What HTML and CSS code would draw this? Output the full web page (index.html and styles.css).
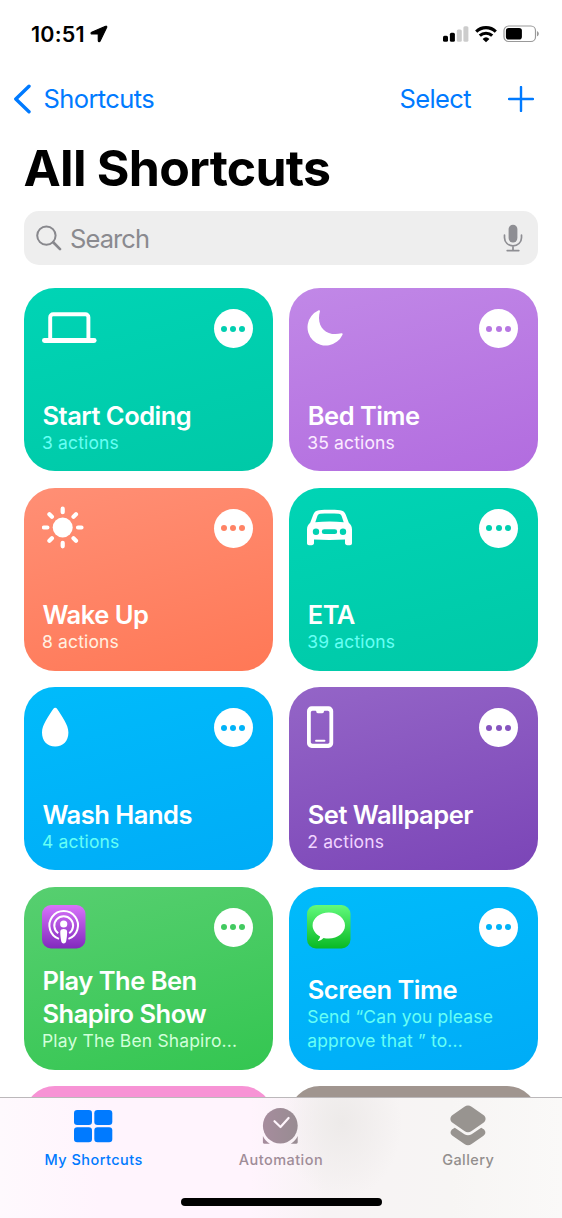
FILE: index.html
```html
<!DOCTYPE html>
<html lang="en">
<head>
<meta charset="utf-8">
<title>All Shortcuts</title>
<link rel="stylesheet" href="styles.css">
</head>
<body>
<div class="phone">
  <main class="content">
    <div class="status">
      <div class="status-left">
        <span class="time">10:51</span>
        <svg class="location" width="18" height="18" viewBox="0 0 18 18"><path d="M15.6 1.2 1.700 7.200c-1.100.5-.8 1.800.4 1.800h5.700c.3 0 .5.2.5.5v6c0 1.300 1.300 1.500 1.800.4L16.700 2.300c.3-.8-.3-1.500-1.100-1.100z" fill="#000" stroke="#000" stroke-width="1.200"/></svg>
      </div>
      <div class="status-right">
        <svg width="26" height="17" viewBox="0 0 26 17"><rect x="0" y="9.700" width="5" height="6" rx="1.500"/><rect x="6.900" y="6.800" width="5" height="8.900" rx="1.500"/><g fill="#ccc"><rect x="13.800" y="3.600" width="5" height="12.100" rx="1.500"/><rect x="20.400" y="0.200" width="5" height="15.500" rx="1.500"/></g></svg>
        <svg width="22" height="17" viewBox="0 0 22 17"><g fill="none" stroke="#000" stroke-width="3.100"><path d="M1.200 5.600a14 14 0 0 1 19.600 0"/><path d="M4.800 9.700a8.900 8.900 0 0 1 12.400 0"/></g><path d="M7.600 12.900a5 5 0 0 1 6.800 0L11 16.300z"/></svg>
        <svg width="37" height="18" viewBox="0 0 37 18"><rect x="1" y="1" width="31.500" height="15.500" rx="4.600" fill="none" stroke="#999" stroke-width="1.200"/><rect x="2.900" y="2.900" width="16" height="11.700" rx="2.800"/><path d="M34 6.300c2.400.6 2.400 4.400 0 5z" fill="#999"/></svg>
      </div>
    </div>

    <nav class="nav">
      <div class="back">
        <svg width="20" height="30" viewBox="0 0 20 30"><path d="M17 2.200 3.800 15 17 27.800" fill="none" stroke="#007aff" stroke-width="3.400" stroke-linecap="round" stroke-linejoin="round"/></svg>
        <span class="back-label">Shortcuts</span>
      </div>
      <div class="nav-actions">
        <span class="select">Select</span>
        <svg width="26" height="26" viewBox="0 0 26 26"><path d="M13 1v24M1 13h24" stroke="#007aff" stroke-width="2.400" stroke-linecap="round"/></svg>
      </div>
    </nav>

    <h1 class="title">All Shortcuts</h1>

    <div class="search">
      <svg width="26" height="26" viewBox="0 0 26 26"><g fill="none" stroke="#88888d" stroke-linecap="round"><circle cx="10.400" cy="10.600" r="9.200" stroke-width="2"/><path d="m17.200 17.300 6.800 6.800" stroke-width="2.700"/></g></svg>
      <span class="search-label">Search</span>
      <svg width="20" height="28" viewBox="0 0 20 28"><rect x="5.600" y=".7" width="8.800" height="17.800" rx="4.400" fill="#8e8e93"/><path d="M1.500 11.200v2.500a8.500 8.200 0 0 0 17 0v-2.500M10 21.900v4.600M4.200 26.600h11.600" fill="none" stroke="#8e8e93" stroke-width="1.700" stroke-linecap="round"/></svg>
    </div>

    <section class="grid">
      <article class="card teal">
        <div class="card-top">
          <svg width="56" height="44" viewBox="0 0 56 44"><path d="M8.200 32.500V11.200a3 3 0 0 1 3-3h32.200a3 3 0 0 1 3 3V32.500" fill="none" stroke="#fff" stroke-width="3.900"/><rect x="0" y="32" width="54.600" height="4.900" rx="2.450" fill="#fff"/></svg>
          <span class="more"><i></i><i></i><i></i></span>
        </div>
        <h2>Start Coding</h2><p>3 actions</p>
      </article>
      <article class="card lilac">
        <div class="card-top">
          <svg width="56" height="44" viewBox="0.700 -0.500 56 44"><path d="M13.700 4.600c-.1-.8-.8-1-1.700-.6A18.300 18.300 0 1 0 36.200 28.200c.4-1-.1-1.700-1-1.400C20.500 30.500 9.200 20.500 13.700 4.600z" fill="#fff"/></svg>
          <span class="more"><i></i><i></i><i></i></span>
        </div>
        <h2>Bed Time</h2><p>35 actions</p>
      </article>
      <article class="card coral">
        <div class="card-top">
          <svg width="56" height="44" viewBox="0 0 56 44"><circle cx="20.700" cy="21.500" r="10" fill="#fff"/><path d="M20.700 2.700v3.500M20.700 36.800v3.500M1.900 21.500h3.500M36 21.500h3.500M7.400 8.200l2.500 2.500M31.500 32.300l2.500 2.500M34 8.200l-2.500 2.500M9.900 32.300l-2.500 2.500" stroke="#fff" stroke-width="4.200" stroke-linecap="round"/></svg>
          <span class="more"><i></i><i></i><i></i></span>
        </div>
        <h2>Wake Up</h2><p>8 actions</p>
      </article>
      <article class="card teal">
        <div class="card-top">
          <svg width="56" height="44" viewBox="0 0 56 44"><path fill="#fff" fill-rule="evenodd" d="M0 23.500c0-3 1-4.700 3.200-6.700l3-8C7.200 5.800 9 4.400 12 4.200c7-.5 14-.5 21 0 3 .2 4.800 1.600 5.800 4.600l3 8c2.200 2 3.200 3.700 3.200 6.700v13.800c0 1.100-.9 2-2 2h-2.700c-1.300 0-2.300-.9-2.300-2.200v-3.500c-10 .6-21 .6-31 0v3.500C7 38.400 6 39.300 4.700 39.300H2c-1.100 0-2-.9-2-2zM8.300 16.200c9-.9 19.400-.9 28.400 0l-2-6c-.5-1.500-1.400-2.300-3-2.400-6-.4-12.400-.4-18.400 0-1.600.1-2.500.9-3 2.400zM9 22.600a3.200 3.200 0 1 0 0 6.400 3.200 3.200 0 0 0 0-6.400m27 0a3.200 3.200 0 1 0 0 6.400 3.200 3.200 0 0 0 0-6.400m-18.800.7a2.400 2.400 0 0 0 0 4.800h10.600a2.400 2.400 0 0 0 0-4.800z"/></svg>
          <span class="more"><i></i><i></i><i></i></span>
        </div>
        <h2>ETA</h2><p>39 actions</p>
      </article>
      <article class="card blue">
        <div class="card-top">
          <svg width="56" height="44" viewBox="0 -0.500 56 44"><path d="M11.200 3.600c1-1.700 3-1.700 4 0C20 11 26.400 19.500 26.400 27c0 8.500-5.200 13.900-13.200 13.900S0 35.500 0 27C0 19.500 6.400 11 11.200 3.600z" fill="#fff"/></svg>
          <span class="more"><i></i><i></i><i></i></span>
        </div>
        <h2>Wash Hands</h2><p class="aqua">4 actions</p>
      </article>
      <article class="card purple">
        <div class="card-top">
          <svg width="56" height="44" viewBox="0 -0.500 56 44"><path fill="#fff" fill-rule="evenodd" d="M4.700.800h16.800a4.700 4.700 0 0 1 4.700 4.700v32.300a4.700 4.700 0 0 1-4.700 4.700H4.700A4.700 4.700 0 0 1 0 37.800V5.500A4.700 4.700 0 0 1 4.700.800zM5.500 5.300a1.700 1.700 0 0 0-1.700 1.700v29.500c0 1 .8 1.700 1.700 1.700h15.200c1 0 1.700-.8 1.700-1.700V7c0-1-.8-1.700-1.700-1.700h-3c-.5 0-.8.300-.8.800 0 1-.6 1.600-1.600 1.600h-4.400c-1 0-1.600-.6-1.600-1.600 0-.5-.3-.8-.8-.8z"/><path d="M9 35.200h8.500" stroke="#fff" stroke-width="1.900" stroke-linecap="round"/></svg>
          <span class="more"><i></i><i></i><i></i></span>
        </div>
        <h2>Set Wallpaper</h2><p>2 actions</p>
      </article>
      <article class="card green">
        <div class="card-top">
          <svg width="44" height="44" viewBox="0 0.400 44 44"><defs><linearGradient id="pod" x2="0" y2="1"><stop stop-color="#d873fa"/><stop offset="1" stop-color="#8129bd"/></linearGradient></defs><rect width="43.500" height="43.500" y=".4" rx="9" fill="url(#pod)"/><g fill="none" stroke="#fff"><path d="M17 34.300a14.300 14.300 0 1 1 9.400 0" stroke-width="2"/><path d="M16.200 28.600a9.400 9.400 0 1 1 11 0" stroke-width="2"/></g><circle cx="21.700" cy="19.400" r="3.600" fill="#fff"/><path d="M18.300 26.700c.3-3 6.500-3 6.800 0 .2 3-.4 7.600-1 10.200-.5 2.500-4.300 2.500-4.800 0-.6-2.600-1.200-7.200-1-10.200z" fill="#fff"/></svg>
          <span class="more"><i></i><i></i><i></i></span>
        </div>
        <h2>Play The Ben<br>Shapiro Show</h2><p>Play The Ben Shapiro...</p>
      </article>
      <article class="card blue">
        <div class="card-top">
          <svg width="44" height="44" viewBox="0 0.400 44 44"><defs><linearGradient id="msg" x2="0" y2="1"><stop stop-color="#62fa7b"/><stop offset="1" stop-color="#09b924"/></linearGradient></defs><rect width="43.500" height="43.500" y=".4" rx="9" fill="url(#msg)"/><path d="M21.800 8c9 0 16.200 5.700 16.200 13s-7.200 13-16.200 13c-1.900 0-3.700-.2-5.300-.7-1.400 1.500-3.200 2.700-5.200 3-.4 0-.5-.4-.2-.7 1-1 1.800-2.200 2-3.700C8.700 29.600 5.600 25.600 5.600 21c0-7.300 7.200-13 16.200-13z" fill="#fff"/></svg>
          <span class="more"><i></i><i></i><i></i></span>
        </div>
        <h2>Screen Time</h2><p class="aqua">Send “Can you please<br>approve that ” to...</p>
      </article>
      <article class="card pink"></article>
      <article class="card taupe"></article>
    </section>
  </main>

  <footer class="tabbar">
    <div class="tabs">
      <div class="tab active">
        <svg width="40" height="44" viewBox="0 0 40 44"><g fill="#007aff"><rect x="0" y="6" width="18" height="15" rx="3.200"/><rect x="20.300" y="6" width="18" height="15" rx="3.200"/><rect x="0" y="23.300" width="18" height="15" rx="3.200"/><rect x="20.300" y="23.300" width="18" height="15" rx="3.200"/></g></svg>
        <span>My Shortcuts</span>
      </div>
      <div class="tab automation">
        <svg width="40" height="44" viewBox="0.700 0 40 44"><defs><linearGradient id="clk"><stop stop-color="#a68c9d"/><stop offset="1" stop-color="#988c92"/></linearGradient></defs><g fill="url(#clk)"><ellipse cx="20" cy="21.800" rx="17.400" ry="17.700"/><path d="M2.600 32v6.300c0 .9.400 1.400 1.400 1.400h5.600C6.500 38 4.300 35.400 2.600 32zM37.400 32v6.300c0 .9-.4 1.400-1.400 1.400h-5.600c3.100-1.700 5.300-4.300 7-7.700z"/></g><path d="m14.200 17.200 6 5.800 8.100-9" fill="none" stroke="#fff5fc" stroke-width="2.200" stroke-linecap="round" stroke-linejoin="round"/></svg>
        <span>Automation</span>
      </div>
      <div class="tab gallery">
        <svg width="40" height="44" viewBox="0 0 40 44"><g fill="#989490"><path d="M6.800 23.800 16.400 30.200c2.300 1.500 4.900 1.500 7.200 0l9.600-6.400c5 2.200 5.200 5.800 2.300 8L23.600 40.100c-2.300 1.600-4.900 1.600-7.200 0L4.500 31.800c-2.900-2.200-2.700-5.800 2.300-8z"/><path d="M16.400 2.800c2.300-1.600 4.900-1.600 7.200 0l11.800 8.100c2.900 2 2.900 5.900 0 7.900L23.600 27c-2.300 1.600-4.900 1.600-7.200 0L4.600 18.800c-2.900-2-2.900-5.900 0-7.900z" stroke="#f7f5f4" stroke-width="2.600" paint-order="stroke"/></g></svg>
        <span>Gallery</span>
      </div>
    </div>
    <div class="home"></div>
  </footer>
</div>
</body>
</html>
```
FILE: styles.css
```css
* { box-sizing: border-box; }
body { margin: 0; background: #fff; font-family: Inter, "Liberation Sans", sans-serif; }
svg { display: block; flex: none; }
h1, h2, p { margin: 0; }
.phone { width: 562px; height: 1218px; overflow: hidden; display: flex; flex-direction: column; }
.content { height: 1097px; flex: none; overflow: hidden; }

.status { height: 68px; padding: 0 22px 0 31px; display: flex; align-items: center; justify-content: space-between; }
.status-left { display: flex; align-items: center; gap: 5px; }
.time { font-size: 21.500px; font-weight: 600; letter-spacing: 0.200px; }
.status-right { display: flex; align-items: center; gap: 6px; }

.nav { height: 62px; padding: 0 28px 0 12px; display: flex; align-items: center; justify-content: space-between; color: #007aff; font-size: 25.500px; line-height: 30px; }
.back { display: flex; align-items: center; gap: 11.500px; }
.back-label { letter-spacing: -0.600px; }
.back-label, .select { padding-bottom: 1px; }
.nav-actions { display: flex; align-items: center; gap: 37px; }
.select { letter-spacing: -0.600px; }

.title { height: 81px; padding-left: 23.500px; font-size: 50px; font-weight: 700; line-height: 77px; letter-spacing: -0.750px; white-space: nowrap; }

.search { margin: 0 24px; height: 54px; padding: 0 15px 0 12px; border-radius: 15px; background: #eee; display: flex; align-items: center; gap: 8px; }
.search-label { flex: 1; color: #8a8a8f; font-size: 25.500px; letter-spacing: -0.900px; }

.grid { padding: 23px 24px 0; display: grid; grid-template-columns: 1fr 1fr; grid-auto-rows: 183px; gap: 16.500px; }
.card { border-radius: 31px; padding: 18px 20px 16.500px 18px; display: flex; flex-direction: column; color: #fff; }
.card-top { display: flex; justify-content: space-between; align-items: center; height: 44px; margin-bottom: auto; }
.card h2 { font-size: 25.500px; font-weight: 600; line-height: 33px; letter-spacing: -0.500px; white-space: nowrap; padding-left: 0.500px; }
.card p { font-size: 17.500px; line-height: 24px; margin-top: -1px; letter-spacing: 0.150px; white-space: nowrap; }
.more { width: 39px; height: 39px; margin-top: 1px; border-radius: 50%; background: #fff; display: flex; align-items: center; justify-content: center; gap: 3.200px; }
.more i { width: 6px; height: 6px; border-radius: 50%; background: var(--dot); }

.teal { --dot: #00cfb0; background: linear-gradient(165deg, #00d4b5, #00c9a7); }
.teal p, .card .aqua { color: #67fff5; }
.lilac { --dot: #b777e2; background: linear-gradient(165deg, #c188e7, #b26cdf); }
.lilac p { color: #fbeaff; }
.coral { --dot: #ff8365; background: linear-gradient(165deg, #ff8f75, #ff7856); }
.coral p { color: #fff1e2; }
.blue { --dot: #00b3f8; background: linear-gradient(165deg, #00bbfb, #00acf7); }
.purple { --dot: #8654bf; background: linear-gradient(165deg, #9465c7, #7b45b7); }
.purple p { color: #f1d4ff; }
.green { --dot: #43ca60; background: linear-gradient(165deg, #57cf70, #34c651); }
.green p { color: #d1ffda; }
.pink { background: #f793d5; }
.taupe { background: #a0958f; }

.tabbar { height: 121px; border-top: 1px solid #bbb8ba; background: radial-gradient(ellipse 60px 75px at 342px 25px, #edeae9, transparent), linear-gradient(90deg, #fef9fd 0, #fff4fd 100px, #fff4fd 250px, #f7f3f4 325px, #f7f5f4 450px, #faf9f8 562px); display: flex; flex-direction: column; }
.tabs { display: grid; grid-template-columns: repeat(3, 187.300px); height: 100px; }
.tab { padding-top: 6px; display: flex; flex-direction: column; align-items: center; font-size: 14.500px; font-weight: 500; letter-spacing: 0.450px; line-height: 18px; color: #928e8d; }
.tab span { margin-top: 3px; }
.tab.active { color: #007aff; }
.tab.automation { color: #9f8c98; }
.home { width: 201px; height: 8px; border-radius: 4px; background: #000; margin: 0 auto; }
```
